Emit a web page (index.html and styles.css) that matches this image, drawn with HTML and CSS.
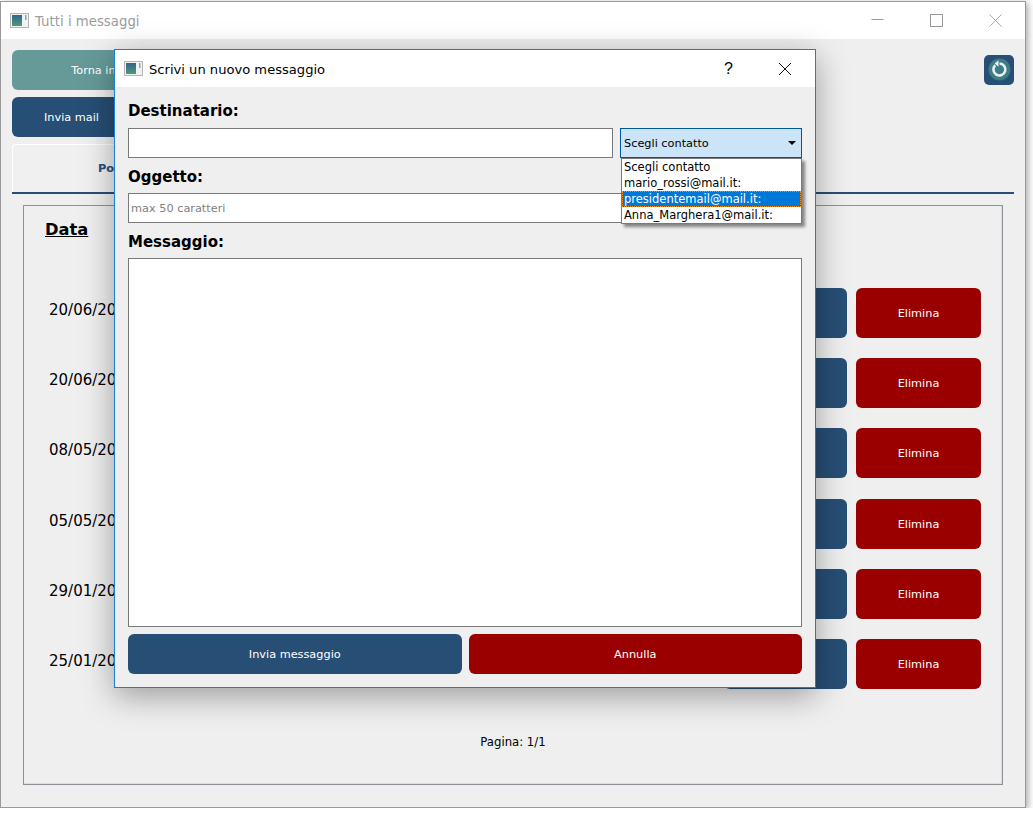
FILE: index.html
```html
<!DOCTYPE html>
<html lang="en">
  <head>
    <meta charset="UTF-8" />
    <title>Tutti i messaggi</title>
    <link rel="stylesheet" href="styles.css">
  </head>
  <body>
    <div class="window">
      <div class="titlebar">
        <svg class="app-icon" viewBox="0 0 19 15">
          <defs>
            <linearGradient id="iconFill" x1="0" y1="0" x2="0" y2="1">
              <stop offset="0" stop-color="#33648f" />
              <stop offset="1" stop-color="#4f9a78" />
            </linearGradient>
          </defs>
          <rect x="0.5" y="0.5" width="18" height="14" fill="#f2f2f2" stroke="#b5b5b5" />
          <rect x="2" y="2" width="10" height="11" fill="url(#iconFill)" />
          <rect x="15" y="2" width="1.5" height="5" fill="#7fb0a8" />
        </svg>
        <span class="window-title">Tutti i messaggi</span>
        <div class="window-controls">
          <svg viewBox="0 0 59 20"><path d="M23.5 8.5H35.5" stroke="#999" fill="none" /></svg>
          <svg viewBox="0 0 59 20"><rect x="23.5" y="3.5" width="12" height="12" stroke="#999" fill="none" /></svg>
          <svg viewBox="0 0 59 20"><path d="M23.5 3.5L35.5 15.5M35.5 3.5L23.5 15.5" stroke="#aaa" fill="none" /></svg>
        </div>
      </div>

      <div class="main">
        <div class="top-row">
          <button class="btn btn-teal btn-back">Torna indietro</button>
          <button class="btn-refresh">
            <svg viewBox="0 0 30 30" width="30" height="30">
              <circle cx="15.5" cy="14.5" r="11" fill="#3d7b85" />
              <path d="M11.2 10.2A6 6 0 1 0 15.5 8.5" stroke="#e8f0f1" stroke-width="2.6" fill="none" />
              <path d="M14.5 5.3L14.5 11.7L10.6 8.5Z" fill="#e8f0f1" />
            </svg>
          </button>
        </div>
        <button class="btn btn-blue btn-mail">Invia mail</button>
        <div class="tabbar">
          <div class="tab">Posta ricevuta</div>
        </div>

        <div class="frame">
          <div class="col-title">Data</div>
          <div class="rows">
            <div class="row">
              <span class="date">20/06/2020</span>
              <button class="btn btn-blue btn-open"></button>
              <button class="btn btn-red btn-del">Elimina</button>
            </div>
            <div class="row">
              <span class="date">20/06/2020</span>
              <button class="btn btn-blue btn-open"></button>
              <button class="btn btn-red btn-del">Elimina</button>
            </div>
            <div class="row">
              <span class="date">08/05/2020</span>
              <button class="btn btn-blue btn-open"></button>
              <button class="btn btn-red btn-del">Elimina</button>
            </div>
            <div class="row">
              <span class="date">05/05/2020</span>
              <button class="btn btn-blue btn-open"></button>
              <button class="btn btn-red btn-del">Elimina</button>
            </div>
            <div class="row">
              <span class="date">29/01/2020</span>
              <button class="btn btn-blue btn-open"></button>
              <button class="btn btn-red btn-del">Elimina</button>
            </div>
            <div class="row">
              <span class="date">25/01/2020</span>
              <button class="btn btn-blue btn-open"></button>
              <button class="btn btn-red btn-del">Elimina</button>
            </div>
          </div>
          <div class="pager">Pagina: 1/1</div>
        </div>
      </div>
    </div>

    <!-- dialog on top of the main window -->
    <div class="dialog">
      <div class="dialog-title">
        <svg class="app-icon" viewBox="0 0 19 15">
          <rect x="0.5" y="0.5" width="18" height="14" fill="#f2f2f2" stroke="#b5b5b5" />
          <rect x="2" y="2" width="10" height="11" fill="url(#iconFill)" />
          <rect x="15" y="2" width="1.5" height="5" fill="#7fb0a8" />
        </svg>
        <span class="dialog-name">Scrivi un nuovo messaggio</span>
        <span class="help">?</span>
        <svg class="dialog-close" viewBox="0 0 14 14" width="14" height="14">
          <path d="M1 1L13 13M13 1L1 13" stroke="#111" fill="none" />
        </svg>
      </div>
      <div class="dialog-body">
        <label class="field-label">Destinatario:</label>
        <div class="to-row">
          <input class="field to-input" type="text" />
          <div class="combo">
            <span>Scegli contatto</span>
            <span class="arrow"></span>
            <ul class="combo-list">
              <li>Scegli contatto</li>
              <li>mario_rossi@mail.it:</li>
              <li class="selected">presidentemail@mail.it:</li>
              <li>Anna_Marghera1@mail.it:</li>
            </ul>
          </div>
        </div>
        <label class="field-label">Oggetto:</label>
        <input class="field" type="text" placeholder="max 50 caratteri" />
        <label class="field-label">Messaggio:</label>
        <textarea class="field message"></textarea>
        <div class="dialog-buttons">
          <button class="btn btn-blue">Invia messaggio</button>
          <button class="btn btn-red">Annulla</button>
        </div>
      </div>
    </div>
  </body>
</html>
```

FILE: styles.css
```css
* {
  box-sizing: border-box;
}
body {
  margin: 0;
  padding-top: 1px;
  background: #fff;
  font-family: "DejaVu Sans", sans-serif;
  font-size: 11.3px;
  color: #000;
}
.window {
  width: 1026px;
  height: 807px;
  border: 1px solid #999;
  background: #efefef;
  box-shadow: 2px 2px 7px rgba(0, 0, 0, 0.35);
  display: flex;
  flex-direction: column;
}
.titlebar {
  height: 37px;
  flex: none;
  background: #fff;
  display: flex;
  align-items: center;
  padding-left: 9px;
}
.app-icon {
  width: 19px;
  height: 15px;
  flex: none;
}
.window-title {
  margin-left: 6px;
  margin-top: 2px;
  font-size: 13.3px;
  color: #9c9c9c;
}
.window-controls {
  margin-left: auto;
  display: flex;
}
.window-controls svg {
  width: 59px;
  height: 20px;
}
.main {
  flex: 1;
  min-height: 0;
  display: flex;
  flex-direction: column;
  padding: 11px 11px 22px 11px;
}
.btn {
  border: none;
  border-radius: 6px;
  color: #fff;
  font-family: inherit;
  font-size: 11.3px;
  padding: 1px 0 0;
}
.btn-teal {
  background: #659a98;
}
.btn-blue {
  background: #274e74;
}
.btn-red {
  background: #9a0000;
}
.top-row {
  display: flex;
  justify-content: space-between;
  align-items: flex-start;
}
.btn-back {
  width: 196px;
  height: 40px;
}
.btn-refresh {
  width: 30px;
  height: 30px;
  margin-top: 5px;
  padding: 0;
  border: none;
  border-radius: 5px;
  background: #274e74;
}
.btn-mail {
  width: 119px;
  height: 40px;
  margin-top: 7px;
}
.tabbar {
  margin-top: 7px;
  height: 50px;
  flex: none;
  border-bottom: 2px solid #274e74;
}
.tab {
  width: 264px;
  height: 48px;
  background: #f0f0f0;
  border: 1px solid #fff;
  border-bottom: none;
  border-radius: 4px 4px 0 0;
  color: #274e74;
  font-weight: bold;
  text-align: center;
  line-height: 48px;
}
.frame {
  flex: 1;
  margin: 11px 11px 0;
  border: 1px solid #8d9299;
  box-shadow: inset -1px -1px 0 #dcdcdc;
  padding: 14px 21px 0 21px;
  display: flex;
  flex-direction: column;
}
.col-title {
  font-size: 16.3px;
  font-weight: bold;
  text-decoration: underline;
  line-height: 20px;
}
.rows {
  margin-top: 48px;
  height: 401px;
  display: flex;
  flex-direction: column;
  justify-content: space-between;
}
.row {
  height: 50px;
  display: flex;
  align-items: center;
}
.date {
  margin-left: 4px;
  margin-bottom: 6px;
  font-size: 15px;
}
.btn-open {
  width: 123px;
  height: 50px;
  margin-left: auto;
}
.btn-del {
  width: 125px;
  height: 50px;
  margin-left: 9px;
}
.pager {
  margin-top: 46px;
  text-align: center;
  line-height: 14px;
  font-size: 11.7px;
}

/* dialog */
.dialog {
  position: absolute;
  left: 114px;
  top: 49px;
  width: 702px;
  height: 639px;
  border: 1px solid #1a7fd0;
  background: #efefef;
  box-shadow: 0 8px 30px rgba(0, 0, 0, 0.35);
  display: flex;
  flex-direction: column;
}
.dialog-title {
  height: 37px;
  flex: none;
  background: #fff;
  display: flex;
  align-items: center;
  padding-left: 9px;
}
.dialog-name {
  margin-left: 6px;
  margin-top: 2px;
  font-size: 13.1px;
}
.help {
  margin-left: auto;
  font-size: 16px;
  font-family: "Liberation Sans", sans-serif;
}
.dialog-close {
  margin-left: 45px;
  margin-right: 23px;
}
.dialog-body {
  flex: 1;
  padding: 15px 13px 13px 13px;
  display: flex;
  flex-direction: column;
}
.field-label {
  font-size: 15px;
  font-weight: bold;
  line-height: 18px;
  height: 18px;
}
.field {
  display: block;
  width: 100%;
  height: 30px;
  margin: 0;
  padding: 0 2px;
  flex: none;
  border: 1px solid #7a7a7a;
  border-radius: 0;
  background: #fff;
  outline: none;
  font-family: inherit;
  font-size: 11.3px;
}
.field::placeholder {
  color: #808080;
}
.to-row {
  display: flex;
  gap: 7px;
  margin-top: 8px;
  margin-bottom: 10px;
}
.to-input {
  flex: 1;
  width: auto;
}
.combo {
  position: relative;
  width: 182px;
  height: 30px;
  flex: none;
  border: 1px solid #005499;
  background: #cce4f7;
  display: flex;
  align-items: center;
  justify-content: space-between;
  padding: 0 5px 0 3px;
}
.arrow {
  width: 0;
  height: 0;
  border-left: 4px solid transparent;
  border-right: 4px solid transparent;
  border-top: 4px solid #000;
}
.combo-list {
  position: absolute;
  left: 0;
  top: 29px;
  width: 181px;
  margin: 0;
  padding: 0;
  list-style: none;
  background: #fff;
  border: 1px solid #7a7a7a;
  box-shadow: 3px 3px 3px rgba(0, 0, 0, 0.45);
  font-size: 11.5px;
  z-index: 2;
}
.combo-list li {
  height: 16px;
  line-height: 16px;
  padding-left: 2px;
}
.combo-list .selected {
  background: #0078d7;
  color: #fff;
  outline: 1px dotted #f28a1e;
  outline-offset: -1px;
}
.to-row + .field-label {
  margin-bottom: 7px;
}
.field + .field-label {
  margin-top: 10px;
  margin-bottom: 7px;
}
.message {
  flex: 1;
  resize: none;
  height: auto;
}
.dialog-buttons {
  display: flex;
  gap: 7px;
  margin-top: 7px;
}
.dialog-buttons .btn {
  flex: 1;
  height: 40px;
}
```
